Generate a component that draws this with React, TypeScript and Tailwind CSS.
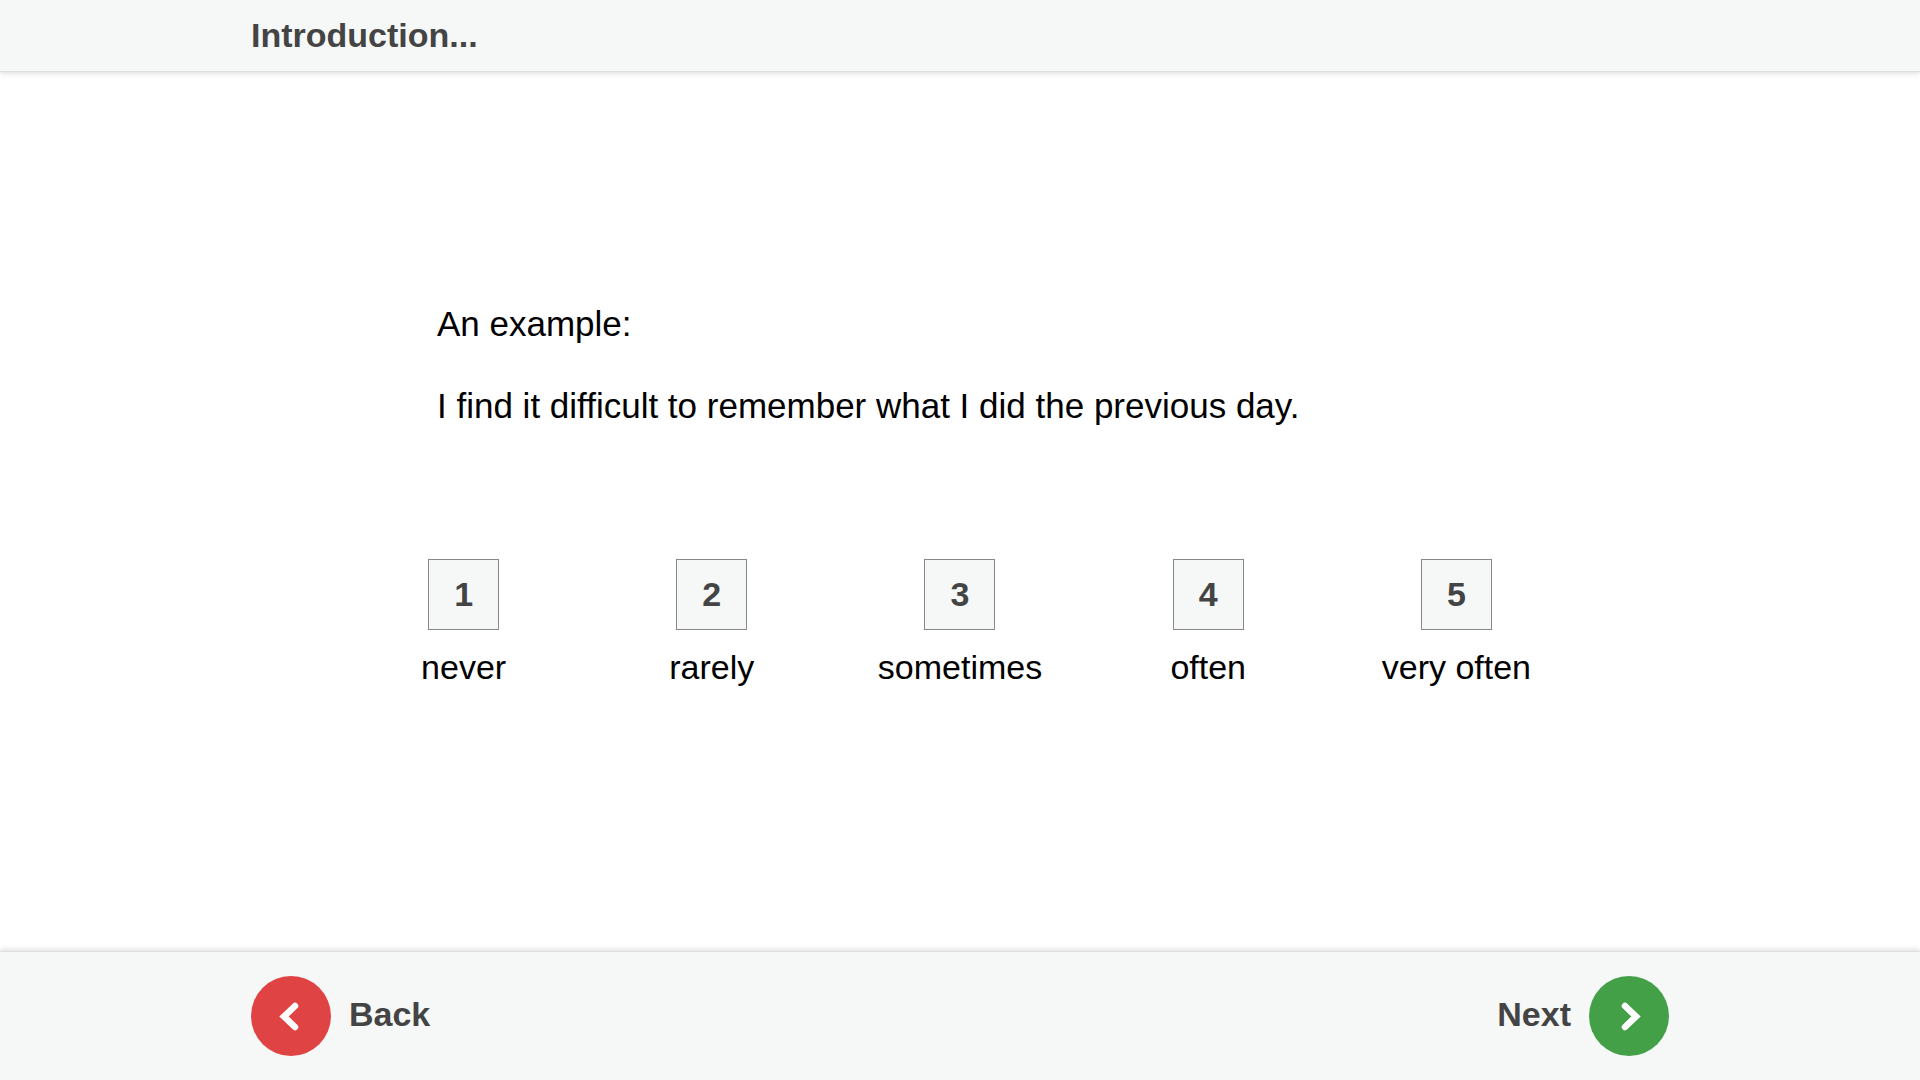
import React from "react";

const options = ["never", "rarely", "sometimes", "often", "very often"];

function Chevron({ d }: { d: string }) {
  return (
    <svg
      viewBox="0 0 80 80"
      className="size-20"
      fill="none"
      stroke="white"
      strokeWidth="6.5"
      strokeLinecap="round"
      strokeLinejoin="miter"
      aria-hidden="true"
    >
      <path d={d} />
    </svg>
  );
}

export default function App() {
  return (
    <div className="flex min-h-screen flex-col bg-white font-['Liberation_Sans',Arial,sans-serif] text-black">
      <header className="border-b border-[#dcdfdf] bg-[#f6f8f8] text-[#444] shadow-[0_1px_6px_rgba(0,0,0,0.15)]">
        <div className="mx-auto w-full max-w-[1418px] py-4">
          <h1 className="text-[34px] leading-[39px] font-bold">Introduction...</h1>
        </div>
      </header>

      <main className="flex flex-1 flex-col items-center justify-center pb-[34px]">
        <div className="w-full max-w-[1046px] text-[35px] leading-[41px]">
          <p className="mb-[41px]">An example:</p>
          <p>I find it difficult to remember what I did the previous day.</p>
        </div>
        <div className="mt-[133px] grid w-full max-w-[1241px] grid-cols-5">
          {options.map((label, i) => (
            <div key={label} className="flex flex-col items-center gap-[18px]">
              <button
                id={`option-${i + 1}`}
                type="button"
                className="size-[71px] border border-[#888] bg-[#f6f8f8] text-[34px] leading-[39px] font-bold text-[#444]"
              >
                {i + 1}
              </button>
              <label htmlFor={`option-${i + 1}`} className="text-[34px] leading-[39px]">
                {label}
              </label>
            </div>
          ))}
        </div>
      </main>

      <footer className="border-t border-[#dcdfdf] bg-[#f6f8f8] text-[34px] leading-[39px] font-bold text-[#444] shadow-[0_-1px_6px_rgba(0,0,0,0.15)]">
        <nav className="mx-auto flex w-full max-w-[1418px] items-center justify-between pt-6 pb-6">
          <button type="button" className="flex items-center gap-[18px]">
            <span className="rounded-full bg-[#e04343]">
              <Chevron d="M44 30 L33 40.500 L44 51" />
            </span>
            <span className="pb-1">Back</span>
          </button>
          <button type="button" className="flex items-center gap-[18px]">
            <span className="pb-1">Next</span>
            <span className="rounded-full bg-[#43a047]">
              <Chevron d="M36 30 L47 40.500 L36 51" />
            </span>
          </button>
        </nav>
      </footer>
    </div>
  );
}
